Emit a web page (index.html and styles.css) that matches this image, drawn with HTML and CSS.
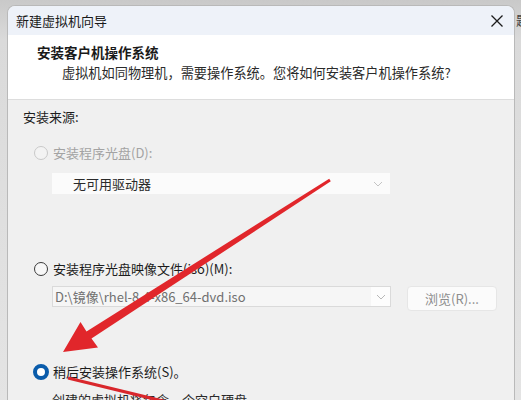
FILE: index.html
```html
<!DOCTYPE html>
<html lang="zh-CN">
<head>
<meta charset="utf-8">
<title>新建虚拟机向导</title>
<link rel="stylesheet" href="styles.css">
</head>
<body>
<div class="screen">
  <div class="dialog">
    <div class="titlebar">
      <span class="title">新建虚拟机向导</span>
      <svg class="close" width="14" height="14" viewBox="0 0 14 14"><path d="M1.5 1.5 L12.5 12.5 M12.5 1.5 L1.5 12.5" stroke="#1b1b1b" stroke-width="1.3" fill="none"/></svg>
    </div>
    <div class="header">
      <div class="h-title">安装客户机操作系统</div>
      <div class="h-sub">虚拟机如同物理机，需要操作系统。您将如何安装客户机操作系统?</div>
    </div>
    <div class="body">
      <div class="section-label">安装来源:</div>

      <div class="radio-row first disabled">
        <span class="radio off"></span>
        <span class="r-label">安装程序光盘(D):</span>
      </div>
      <div class="combo combo-disabled">
        <span class="combo-text">无可用驱动器</span>
        <svg class="chev" width="10" height="6" viewBox="0 0 10 6"><path d="M1 1 L5 5 L9 1" stroke="#c4c4c4" stroke-width="1" fill="none"/></svg>
      </div>

      <div class="radio-row second">
        <span class="radio"></span>
        <span class="r-label">安装程序光盘映像文件(iso)(M):</span>
      </div>
      <div class="iso-row">
        <div class="combo combo-iso">
          <span class="combo-text">D:\镜像\rhel-8.4-x86_64-dvd.iso</span>
          <span class="drop"><svg width="10" height="6" viewBox="0 0 10 6"><path d="M1 1 L5 5 L9 1" stroke="#b8b8b8" stroke-width="1" fill="none"/></svg></span>
        </div>
        <div class="btn">浏览(R)...</div>
      </div>

      <div class="radio-row third">
        <span class="radio on"></span>
        <span class="r-label">稍后安装操作系统(S)。</span>
      </div>
      <div class="desc">创建的虚拟机将包含一个空白硬盘。</div>
    </div>
  </div>
  <div class="behind">题</div>
</div>
<svg class="arrows" width="521" height="400" viewBox="0 0 521 400">
  <polygon fill="#e1262b" points="329.2,178.7 330.8,181.3 91.5,338.5 98,347.5 63,352 80.5,322 86.5,331.5"/>
  <line x1="68" y1="378" x2="175" y2="404" stroke="#d9272c" stroke-width="3.2"/>
</svg>
</body>
</html>
```

FILE: styles.css
```css
html, body {
  margin: 0;
  padding: 0;
}
body {
  width: 521px;
  height: 400px;
  overflow: hidden;
  background: #d2d2d2;
  font-family: "Noto Sans CJK SC", "Noto Sans", sans-serif;
  font-size: 13px;
  color: #1c1c1c;
  position: relative;
}
.screen {
  display: flex;
  height: 400px;
  background: linear-gradient(#c9c9c9, #dadada 40px, #e4e4e4);
}
.dialog {
  margin-top: 5px;
  margin-left: 7px;
  width: 508px;
  height: 395px;
  box-sizing: border-box;
  border: 1px solid #b9b9b9;
  border-bottom: none;
  border-radius: 8px 8px 0 0;
  overflow: hidden;
  background: #f0f0f0;
  display: flex;
  flex-direction: column;
  flex: none;
}
.titlebar {
  height: 29px;
  flex: none;
  background: #eef2f9;
  display: flex;
  align-items: center;
  justify-content: space-between;
  padding: 0 10px 0 8px;
}
.title {
  font-size: 13px;
  line-height: 18px;
  color: #1a1a1a;
  margin-top: 1px;
}
.close {
  margin-top: 1px;
}
.header {
  flex: none;
  background: #ffffff;
  border-bottom: 1px solid #dddddd;
  padding-top: 8px;
  box-sizing: border-box;
  height: 65px;
}
.h-title {
  padding-left: 29px;
  font-size: 13.5px;
  font-weight: 700;
  line-height: 18px;
  color: #1a1a1a;
}
.h-sub {
  padding-left: 54px;
  margin-top: 3px;
  font-size: 13.2px;
  line-height: 18px;
  color: #2a2a2a;
}
.body {
  padding: 8px 0 0 15px;
  background: #f0f0f0;
  flex: 1;
  min-height: 0;
}
.section-label {
  line-height: 18px;
  color: #1e1e1e;
}
.radio-row {
  display: flex;
  align-items: center;
  height: 18px;
  padding-left: 11px;
  gap: 5px;
}
.radio-row.first { margin-top: 18px; }
.radio-row.second { margin-top: 66px; }
.radio-row.third { margin-top: 52px; }
.r-label { line-height: 18px; }
.disabled .r-label { color: #a3a3a3; }
.radio {
  width: 12px;
  height: 12px;
  border-radius: 50%;
  border: 1px solid #3a3a3a;
  background: #f7f7f7;
  flex: none;
}
.radio.off {
  border-color: #c9c9c9;
  background: #f3f3f3;
}
.radio.on {
  width: 8px;
  height: 8px;
  border: 4px solid #0a5cab;
  background: #ffffff;
  margin-left: -1px;
  margin-right: -1px;
}
.combo {
  margin-left: 29px;
  width: 338px;
  height: 21px;
  box-sizing: border-box;
  display: flex;
  align-items: center;
  justify-content: space-between;
}
.combo-disabled {
  margin-top: 11px;
  background: #fbfbfb;
  padding: 0 7px 0 21px;
}
.combo-disabled .combo-text { color: #2a2a2a; }
.iso-row {
  margin-top: 8px;
  display: flex;
  align-items: flex-start;
  gap: 16px;
  height: 25px;
}
.combo-iso {
  background: #f6f6f6;
  border: 1px solid #dadada;
  padding-left: 2px;
  width: 339px;
}
.combo-iso .combo-text {
  color: #707070;
  line-height: 18px;
}
.drop {
  width: 19px;
  height: 19px;
  background: #fdfdfd;
  display: flex;
  align-items: center;
  justify-content: center;
}
.btn {
  width: 90px;
  height: 25px;
  box-sizing: border-box;
  background: #fbfbfb;
  border: 1px solid #e6e6e6;
  border-radius: 4px;
  color: #8e8e8e;
  display: flex;
  align-items: center;
  justify-content: center;
  line-height: 18px;
}
.desc {
  margin-top: 10px;
  padding-left: 29px;
  line-height: 18px;
  color: #2a2a2a;
}
.behind {
  margin-top: 12px;
  margin-left: 1px;
  width: 5px;
  overflow: hidden;
  white-space: nowrap;
  font-size: 13px;
  line-height: 16px;
  color: #444;
  flex: none;
}
.arrows {
  position: absolute;
  left: 0;
  top: 0;
  pointer-events: none;
}
```
